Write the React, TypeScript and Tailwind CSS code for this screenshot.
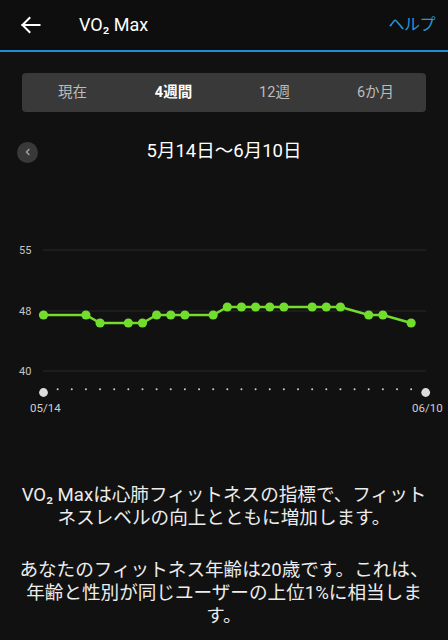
import React from "react";

const FONT = { fontFamily: 'Roboto, "Noto Sans CJK JP", sans-serif' };

const tabs = ["現在", "4週間", "12週", "6か月"];

// day index -> y (svg coords)
const points: [number, number][] = [
  [0, 149], [3, 149], [4, 157], [6, 157], [7, 157], [8, 149], [9, 149],
  [10, 149], [12, 149], [13, 141], [14, 141], [15, 141], [16, 141],
  [17, 141], [19, 141], [20, 141], [21, 141], [23, 149], [24, 149], [26, 157],
];

const dayX = (i: number) => 43.5 + i * 14.14;

const Chart = () => {
  const line = points.map(([i, y]) => `${dayX(i)},${y}`).join(" ");
  return (
    <svg width="448" height="254" className="block">
      {[84, 145, 205].map((y) => (
        <line key={y} x1="43" x2="426" y1={y} y2={y} stroke="#2a2a2a" strokeWidth="1" />
      ))}
      {[
        ["55", 84],
        ["48", 145],
        ["40", 205],
      ].map(([t, y]) => (
        <text key={t} x="19" y={Number(y) + 4} fontSize="11" fill="#c4c4c4" style={FONT}>
          {t}
        </text>
      ))}
      <polyline points={line} fill="none" stroke="#72dd2c" strokeWidth="2.5" />
      {points.map(([i, y]) => (
        <circle key={i} cx={dayX(i)} cy={y} r="4.6" fill="#72dd2c" />
      ))}
      {Array.from({ length: 26 }, (_, k) => k + 1).map((i) => (
        <circle key={i} cx={dayX(i)} cy="223.3" r="1" fill="#cfcfcf" />
      ))}
      <circle cx="43.5" cy="226.5" r="4.4" fill="#dcdcdc" />
      <circle cx="425.7" cy="226.5" r="4.4" fill="#dcdcdc" />
      <text x="30" y="246" fontSize="11.5" fill="#cfcfcf" style={FONT}>
        05/14
      </text>
      <text x="412" y="246" fontSize="11.5" fill="#cfcfcf" style={FONT}>
        06/10
      </text>
    </svg>
  );
};

export default function App() {
  return (
    <div className="w-[448px] h-[640px] overflow-hidden bg-[#111111] text-white" style={FONT}>
      <div className="h-[50px] bg-[#0e0e0e] flex items-center border-b-2 border-[#1d8ed3] box-content">
        <svg width="24" height="24" viewBox="0 0 24 24" className="ml-[19px]" fill="none" stroke="white" strokeWidth="2" strokeLinecap="square">
          <path d="M3.5 12H20.5" />
          <path d="M10.5 5L3.5 12L10.5 19" />
        </svg>
        <div className="ml-[36px] text-[18px] leading-none text-white">
          VO₂ Max
        </div>
        <div className="ml-auto mr-[13px] text-[16px] text-[#2a97d6] tracking-[-0.5px]">
          ヘルプ
        </div>
      </div>

      <div className="mx-[22px] mt-[21px] h-[39px] rounded-[4px] bg-[#393939] grid grid-cols-4">
        {tabs.map((t) => (
          <div
            key={t}
            className={
              t === "4週間"
                ? "flex items-center justify-center text-[14.5px] font-bold text-white"
                : "flex items-center justify-center text-[14.5px] text-[#bcbcbc]"
            }
          >
            {t}
          </div>
        ))}
      </div>

      <div className="mt-[26px] h-[28px] flex items-center relative">
        <div className="ml-[17px] w-[21px] h-[21px] rounded-full bg-[#393939] flex items-center justify-center">
          <svg width="10" height="10" viewBox="0 0 10 10" fill="none" stroke="#a8a8a8" strokeWidth="1.3">
            <path d="M6.3 2L3.5 5L6.3 8" />
          </svg>
        </div>
        <div className="absolute inset-0 flex items-center justify-center text-[18.5px] text-white">
          5月14日〜6月10日
        </div>
      </div>

      <Chart />

      <div className="mt-[64px] px-[10px] text-center text-[18.6px] leading-[23px] text-[#ececec]">
        <p>
          VO₂ Maxは心肺フィットネスの指標で、フィット
          <br />
          ネスレベルの向上とともに増加します。
        </p>
        <p className="mt-[29px]">
          あなたのフィットネス年齢は20歳です。これは、
          <br />
          年齢と性別が同じユーザーの上位1%に相当しま
          <br />
          す。
        </p>
      </div>
    </div>
  );
}
